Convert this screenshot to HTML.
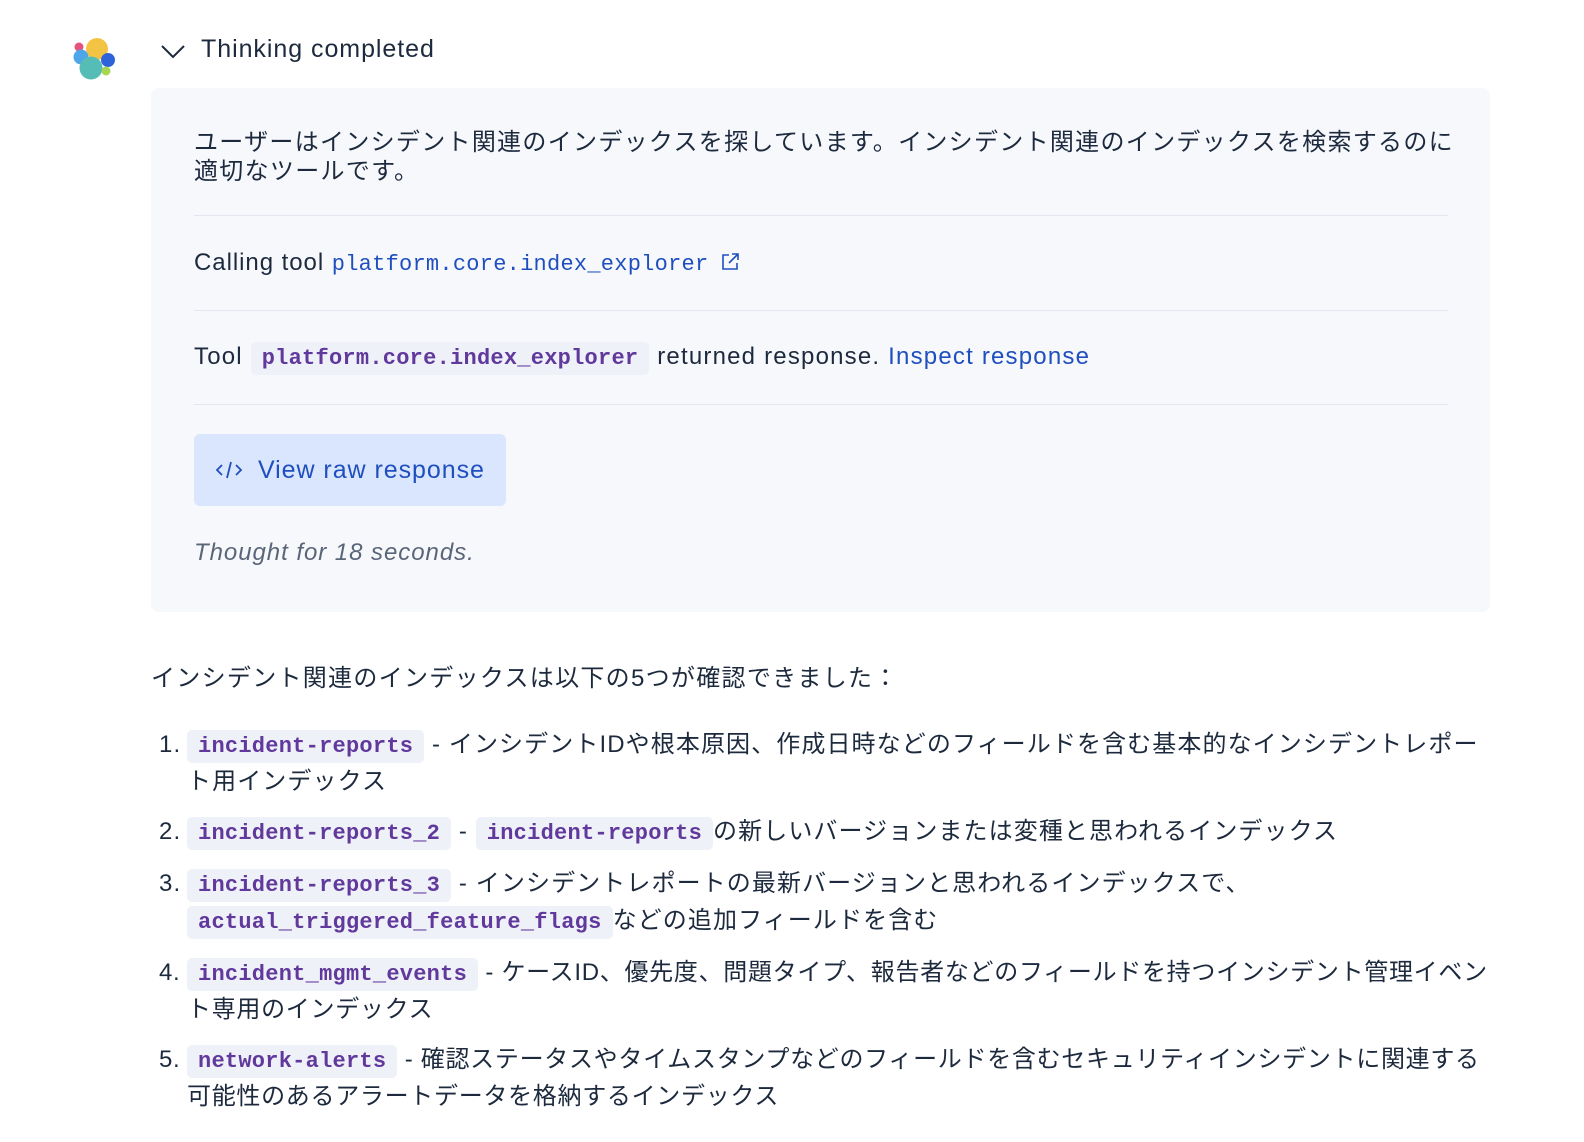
<!DOCTYPE html>
<html><head><meta charset="utf-8"><style>
*{margin:0;padding:0;box-sizing:border-box}
body{width:1584px;height:1142px;background:#fff;font-family:"Liberation Sans","Noto Sans CJK JP",sans-serif;color:#1d2a3e;position:relative;overflow:hidden;letter-spacing:0.95px}
.abs{position:absolute}
.mono{font-family:"Liberation Mono",monospace;letter-spacing:0.25px}
.panel{left:151px;top:88px;width:1339px;height:524px;background:#f6f8fc;border-radius:8px}
.t{font-size:24px;white-space:nowrap}
.hr{left:194px;width:1254px;height:1px;background:#e3e8f0}
.pill{background:#eef1f7;color:#61389c;font-weight:bold;border-radius:5px;padding:4px 11px;font-size:22px;font-family:"Liberation Mono",monospace;letter-spacing:0.25px}
ol{position:absolute;left:151px;top:727px;width:1345px;list-style:none;font-size:24px}
li{position:relative;padding-left:36px;line-height:35px;margin-bottom:15px}
li .n{position:absolute;left:8px;top:0}
</style></head><body>
<svg class="abs" style="left:72px;top:37px" width="44" height="44" viewBox="0 0 44 44">
<circle cx="25" cy="12" r="11" fill="#f3c443"/>
<circle cx="7" cy="10" r="4.5" fill="#e5527b"/>
<circle cx="9" cy="20" r="7.5" fill="#4ea6e8"/>
<circle cx="36" cy="23" r="7" fill="#2f63da"/>
<circle cx="19" cy="31" r="11.5" fill="#55bcb6"/>
<circle cx="34" cy="34" r="4.5" fill="#a7d651"/>
</svg>
<svg class="abs" style="left:160px;top:42px" width="26" height="18" viewBox="0 0 26 18"><path d="M2 4 L13 15 L24 4" fill="none" stroke="#1d2a3e" stroke-width="2"/></svg>
<div class="abs t" style="left:201px;top:35px;font-size:25px">Thinking completed</div>
<div class="abs panel"></div>
<div class="abs" style="left:194px;top:128px;width:1260px;font-size:24px;line-height:29px;letter-spacing:1.3px">ユーザーはインシデント関連のインデックスを探しています。インシデント関連のインデックスを検索するのに適切なツールです。</div>
<div class="abs hr" style="top:215px"></div>
<div class="abs t" style="left:194px;top:249px">Calling tool <span class="mono" style="color:#1f4fbf;font-size:22px">platform.core.index_explorer</span>
<svg width="20" height="20" viewBox="0 0 20 20" style="vertical-align:-2px;margin-left:4px"><path d="M9 3H3v14h14v-6M12 2h6v6M18 2L9 11" fill="none" stroke="#1f4fbf" stroke-width="1.6"/></svg></div>
<div class="abs hr" style="top:310px"></div>
<div class="abs t" style="left:194px;top:343px;letter-spacing:1.2px">Tool <span class="pill">platform.core.index_explorer</span> returned response. <span style="color:#1f4fbf">Inspect response</span></div>
<div class="abs hr" style="top:404px"></div>
<div class="abs" style="left:194px;top:434px;width:312px;height:72px;background:#d9e6fd;border-radius:6px"></div>
<svg class="abs" style="left:215px;top:459px" width="28" height="22" viewBox="0 0 28 22"><path d="M7 6L2 11l5 5M21 6l5 5-5 5M16 3l-4 16" fill="none" stroke="#1f4fbf" stroke-width="1.8"/></svg>
<div class="abs t" style="left:258px;top:456px;color:#1f4fbf;font-size:25px">View raw response</div>
<div class="abs t" style="left:194px;top:539px;font-style:italic;color:#5a6678">Thought for 18 seconds.</div>
<div class="abs t" style="left:151px;top:658px;letter-spacing:1.3px">インシデント関連のインデックスは以下の5つが確認できました：</div>
<ol style="letter-spacing:1.1px">
<li><span class="n">1.</span><span class="pill">incident-reports</span> - インシデントIDや根本原因、作成日時などのフィールドを含む基本的なインシデントレポート用インデックス</li>
<li><span class="n">2.</span><span class="pill">incident-reports_2</span> - <span class="pill">incident-reports</span>の新しいバージョンまたは変種と思われるインデックス</li>
<li><span class="n">3.</span><span class="pill">incident-reports_3</span> - インシデントレポートの最新バージョンと思われるインデックスで、<span class="pill">actual_triggered_feature_flags</span>などの追加フィールドを含む</li>
<li style="letter-spacing:0.7px"><span class="n">4.</span><span class="pill">incident_mgmt_events</span> - ケースID、優先度、問題タイプ、報告者などのフィールドを持つインシデント管理イベント専用のインデックス</li>
<li style="letter-spacing:0.7px"><span class="n">5.</span><span class="pill">network-alerts</span> - 確認ステータスやタイムスタンプなどのフィールドを含むセキュリティインシデントに関連する可能性のあるアラートデータを格納するインデックス</li>
</ol>
</body></html>
